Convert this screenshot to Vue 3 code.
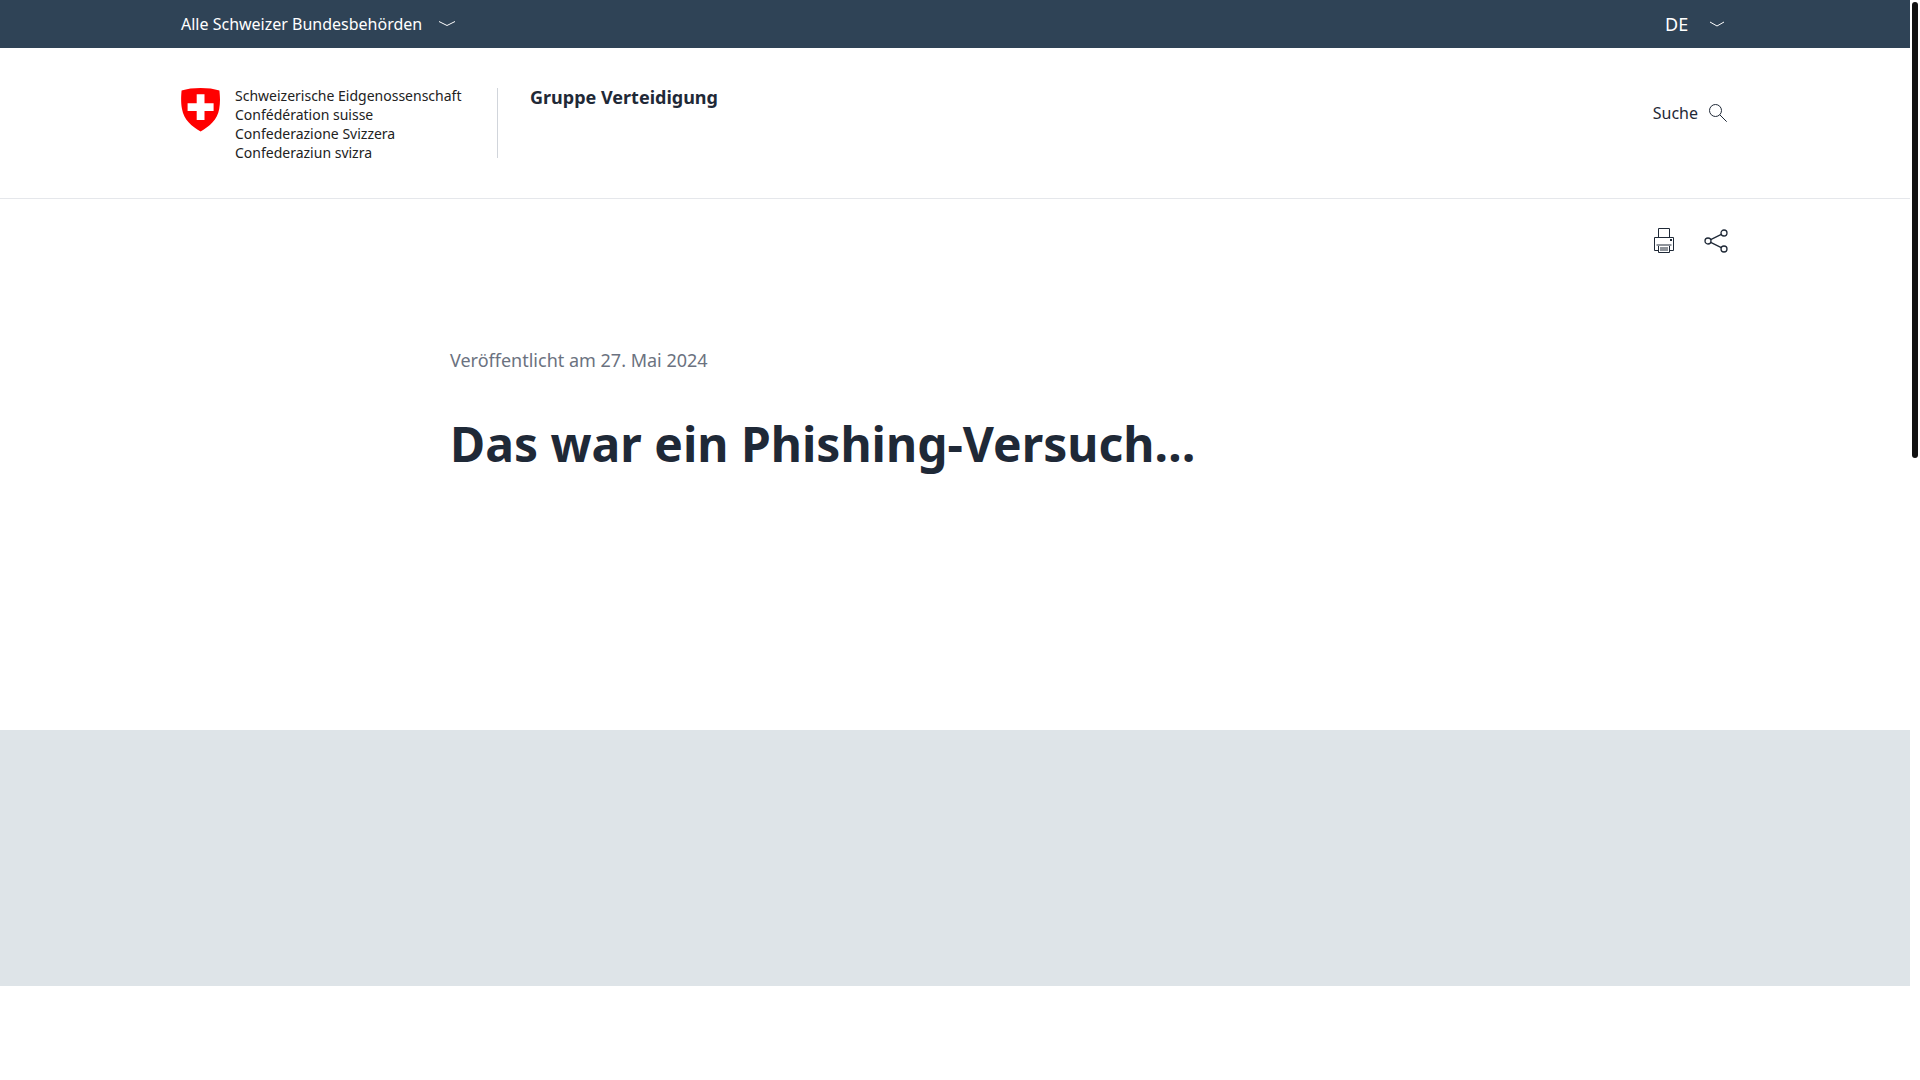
<template>
  <div class="viewport">
    <div class="page">
      <div class="top-bar">
        <div class="container top-bar-inner">
          <button type="button" class="authorities">
            <span>Alle Schweizer Bundesbehörden</span>
            <svg width="18" height="18" viewBox="0 0 18 18" fill="none" stroke="currentColor" aria-hidden="true">
              <path d="M1 6.5 L9 10.5 L17 6.5" />
            </svg>
          </button>
          <div class="language">
            <select v-model="language" aria-label="Sprache">
              <option v-for="lang in languages" :key="lang" :value="lang">{{ lang }}</option>
            </select>
            <svg width="16" height="16" viewBox="0 0 16 16" fill="none" stroke="currentColor" aria-hidden="true">
              <path d="M1 6 L8 10 L15 6" />
            </svg>
          </div>
        </div>
      </div>

      <header class="header">
        <div class="container header-inner">
          <a href="#" class="brand">
            <svg class="shield" width="40" height="44" viewBox="0 0 40 44" aria-hidden="true">
              <path
                fill="#ff0000"
                d="M0.6 2.6 C6 0.8 12.5 0 19.6 0 C26.7 0 33 0.8 38.4 2.6 C38.8 7 39.6 13.5 38.2 21 C36.5 31.5 28.5 38.5 19.6 43.5 C10.7 38.5 2.7 31.5 1 21 C-0.4 13.5 0.2 7 0.6 2.6 Z"
              />
              <path fill="#ffffff" d="M15.7 6.2 H23.5 V15.2 H32.6 V23 H23.5 V32 H15.7 V23 H6.6 V15.2 H15.7 Z" />
            </svg>
            <span class="wordmark">
              <span v-for="name in confederationNames" :key="name">{{ name }}</span>
            </span>
            <span class="department">Gruppe Verteidigung</span>
          </a>
          <button type="button" class="search">
            <span>Suche</span>
            <svg width="20" height="20" viewBox="0 0 20 20" fill="none" stroke="currentColor" aria-hidden="true">
              <circle cx="7.5" cy="7.5" r="6" />
              <path d="M11.8 11.8 L18.7 18.7" />
            </svg>
          </button>
        </div>
      </header>

      <main>
        <div class="container share-bar">
          <button type="button" aria-label="Drucken">
            <svg width="22" height="26" viewBox="0 0 22 26" fill="none" stroke="currentColor" aria-hidden="true">
              <path d="M5.5 9.5 V0.5 H16.5 V9.5" />
              <path d="M5 22.5 H1.5 V9.5 H20.5 V22.5 H17" />
              <path d="M3.5 17 H18.5" stroke-width="2" stroke-opacity="0.5" />
              <path d="M5.5 18 V24.5 H16.5 V18" />
              <rect x="7" y="19" width="8" height="4" fill="currentColor" fill-opacity="0.5" stroke="none" />
              <rect x="17" y="11" width="2" height="2" fill="currentColor" stroke="none" />
            </svg>
          </button>
          <button type="button" aria-label="Teilen">
            <svg width="24" height="24" viewBox="0 0 24 24" fill="none" stroke="currentColor" stroke-width="1.3" aria-hidden="true">
              <circle cx="4" cy="12" r="3" />
              <circle cx="20" cy="4" r="3" />
              <circle cx="20" cy="20" r="3" />
              <path d="M6.7 10.6 L17.3 5.4 M6.7 13.4 L17.3 18.6" />
            </svg>
          </button>
        </div>

        <section class="hero">
          <p class="published">Veröffentlicht am 27. Mai 2024</p>
          <h1>Das war ein Phishing-Versuch…</h1>
        </section>

        <div class="hero-image"></div>
      </main>
    </div>

    <div class="scroll-track">
      <div class="scroll-thumb"></div>
    </div>
  </div>
</template>

<script setup>
import { ref } from 'vue';

const languages = ['DE', 'FR', 'IT', 'EN'];
const language = ref('DE');

const confederationNames = [
  'Schweizerische Eidgenossenschaft',
  'Confédération suisse',
  'Confederazione Svizzera',
  'Confederaziun svizra'
];
</script>

<style>
body {
  background: #ffffff;
}
</style>

<style scoped>
.viewport {
  display: grid;
  grid-template-columns: minmax(0, 1fr) 10px;
  min-height: 100vh;
  font-family: 'Noto Sans', sans-serif;
  color: #1f2937;
}

.container {
  box-sizing: border-box;
  max-width: 1676px;
  margin: 0 auto;
  padding: 0 65px 0 64px;
}

button {
  display: flex;
  align-items: center;
  padding: 0;
  border: 0;
  background: none;
  color: inherit;
  font: inherit;
  cursor: pointer;
}

.top-bar {
  background: #2f4356;
  color: #ffffff;
}

.top-bar-inner {
  display: flex;
  align-items: center;
  justify-content: space-between;
  height: 48px;
}

.authorities {
  gap: 16px;
  font-size: 16px;
}

.language {
  display: flex;
  align-items: center;
  padding-right: 3px;
}

.language select {
  width: 60px;
  height: 32px;
  margin-right: -16px;
  padding: 0;
  border: 0;
  appearance: none;
  background: transparent;
  color: inherit;
  font: inherit;
  font-size: 18px;
  box-sizing: border-box;
}

.language svg {
  pointer-events: none;
}

.header {
  border-bottom: 1px solid #e5e7eb;
}

.header-inner {
  display: flex;
  align-items: flex-start;
  justify-content: space-between;
  padding-top: 40px;
  padding-bottom: 37px;
}

.brand {
  display: flex;
  align-items: flex-start;
  color: inherit;
  text-decoration: none;
}

.wordmark {
  display: flex;
  flex-direction: column;
  gap: 3px;
  width: 262px;
  margin-left: 14px;
  color: #222222;
  font-size: 14px;
  line-height: 16px;
  white-space: nowrap;
}

.department {
  box-sizing: border-box;
  height: 70px;
  padding-left: 32px;
  border-left: 1px solid #d1d5db;
  font-size: 18px;
  font-weight: 700;
  line-height: 18px;
}

.search {
  gap: 10px;
  height: 50px;
  font-size: 16px;
}

.share-bar {
  display: flex;
  justify-content: flex-end;
  gap: 29px;
  padding-top: 28px;
}

.share-bar button {
  height: 28px;
}

.hero {
  box-sizing: border-box;
  max-width: 1010px;
  min-height: 475px;
  margin: 0 auto;
  padding-top: 91px;
}

.published {
  margin: 0;
  color: #6b7280;
  font-size: 18px;
  line-height: 28px;
}

h1 {
  margin: 38px 0 0;
  font-size: 48px;
  font-weight: 700;
  line-height: 64px;
}

.hero-image {
  height: 256px;
  background: #dee4e8;
}

.scroll-track {
  position: sticky;
  top: 0;
  box-sizing: border-box;
  height: 100vh;
  padding: 2px;
}

.scroll-thumb {
  width: 6px;
  height: 456px;
  border-radius: 3px;
  background: #111111;
}
</style>
